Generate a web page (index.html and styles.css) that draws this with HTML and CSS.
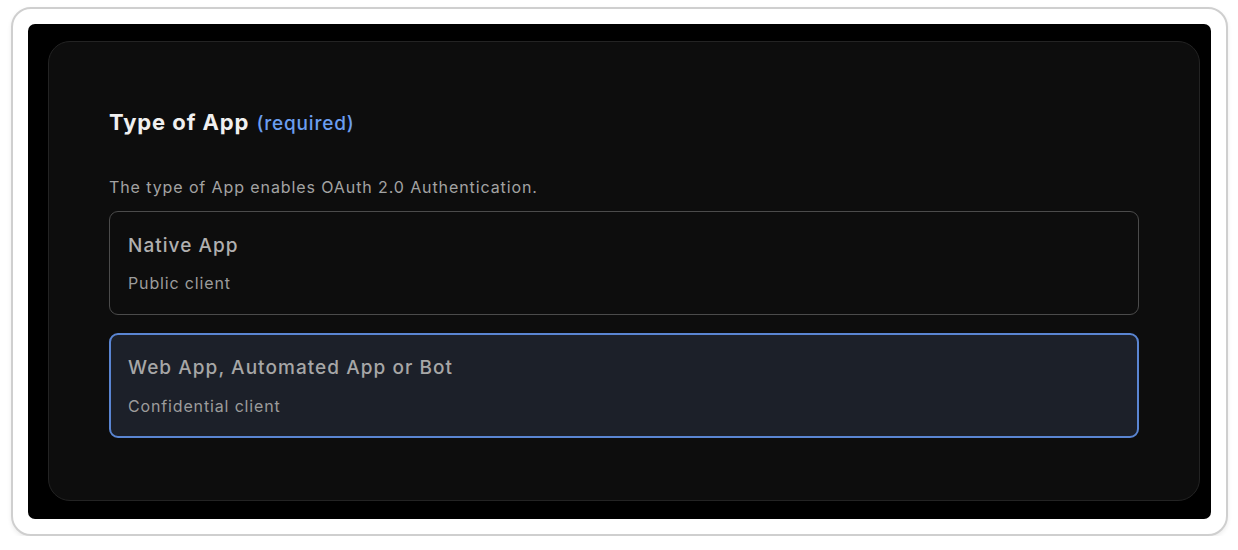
FILE: index.html
```html
<!DOCTYPE html>
<html>
<head>
<meta charset="utf-8">
<link rel="stylesheet" href="styles.css">
</head>
<body>
<div class="frame">
  <div class="screen">
    <section class="card">
      <h2 class="heading">Type of App <span class="req">(required)</span></h2>
      <p class="desc">The type of App enables OAuth 2.0 Authentication.</p>
      <div class="options">
        <div class="option">
          <div class="opt-title">Native App</div>
          <div class="opt-sub">Public client</div>
        </div>
        <div class="option selected">
          <div class="opt-title">Web App, Automated App or Bot</div>
          <div class="opt-sub">Confidential client</div>
        </div>
      </div>
    </section>
  </div>
</div>
</body>
</html>
```
FILE: styles.css
```css
html, body {
  margin: 0;
  padding: 0;
  background: #ffffff;
  font-family: Inter, "Noto Sans", "Liberation Sans", sans-serif;
}
.frame {
  box-sizing: border-box;
  margin: 7px 0 0 11px;
  width: 1217px;
  height: 529px;
  border: 2px solid #cfcfcf;
  border-radius: 20px;
  padding: 15px;
  background: #fff;
  box-shadow: 0 2px 4px rgba(0,0,0,0.08);
}
.screen {
  box-sizing: border-box;
  height: 100%;
  background: #000;
  border-radius: 7px;
  padding: 17px 11px 18px 20px;
}
.card {
  box-sizing: border-box;
  height: 100%;
  background: #0d0d0d;
  border: 1px solid #232323;
  border-radius: 22px;
  padding: 66px 60px 0 60px;
}
.heading {
  margin: 0;
  font-size: 22px;
  line-height: 28px;
  font-weight: 700;
  color: #f0f0f0;
  letter-spacing: 0.9px;
}
.req {
  font-size: 19px;
  font-weight: 500;
  color: #6b9ef0;
  letter-spacing: 0.8px;
  margin-left: 1px;
}
.desc {
  margin: 39px 0 0 0;
  font-size: 16px;
  line-height: 20px;
  color: #a3a3a3;
  letter-spacing: 0.9px;
}
.options {
  margin-top: 14px;
  display: flex;
  flex-direction: column;
  gap: 18px;
}
.option {
  border: 1px solid #4b4b4b;
  border-radius: 9px;
  background: #0d0d0d;
  padding: 22px 18px 21px;
  display: flex;
  flex-direction: column;
  gap: 15px;
}
.option.selected {
  background: #1c2029;
  border: 2px solid #5a85d2;
  padding: 21px 17px 20px;
  gap: 16px;
}
.opt-title {
  font-size: 19px;
  line-height: 24px;
  font-weight: 500;
  color: #b0b0b0;
  letter-spacing: 1.05px;
}
.option.selected .opt-title {
  color: #a7a7a7;
}
.opt-sub {
  font-size: 16px;
  line-height: 20px;
  color: #9c9c9c;
  letter-spacing: 0.85px;
}
```
